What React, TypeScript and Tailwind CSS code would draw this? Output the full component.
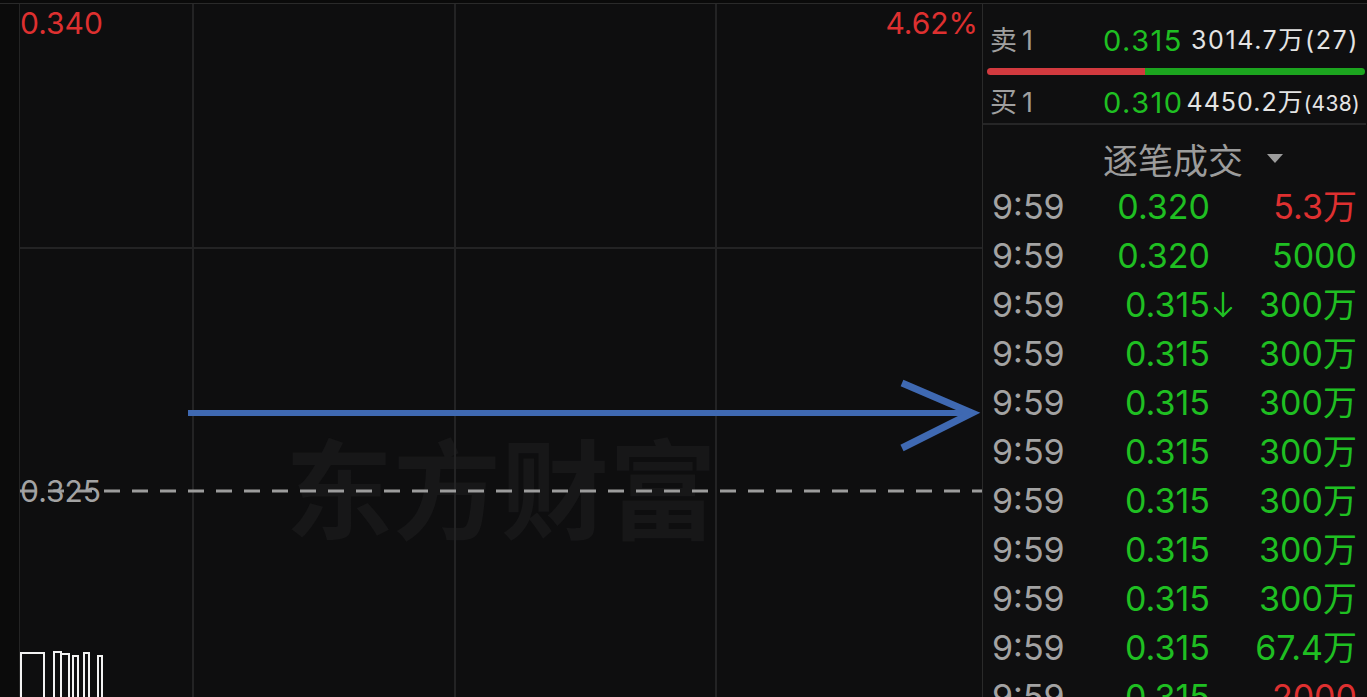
import React from "react";

const GREEN = "text-[#1fbf22]";
const RED = "text-[#de3030]";

type Trade = { p: string; v: string; red?: boolean; down?: boolean };
const trades: Trade[] = [
  { p: "0.320", v: "5.3万", red: true },
  { p: "0.320", v: "5000" },
  { p: "0.315", v: "300万", down: true },
  { p: "0.315", v: "300万" },
  { p: "0.315", v: "300万" },
  { p: "0.315", v: "300万" },
  { p: "0.315", v: "300万" },
  { p: "0.315", v: "300万" },
  { p: "0.315", v: "300万" },
  { p: "0.315", v: "67.4万" },
  { p: "0.315", v: "2000", red: true },
];

function DownArrow() {
  return (
    <svg width="22" height="26" viewBox="0 0 22 26" className="absolute left-full top-1/2 -translate-y-1/2 ml-[2px]">
      <path d="M11 1 V24 M3 16 L11 24 L19 16" stroke="#1fbf22" strokeWidth="2.4" fill="none" strokeLinecap="round" strokeLinejoin="round" />
    </svg>
  );
}

function Chart() {
  return (
    <div className="relative w-[963px] h-full border-l border-[#242424] bg-[#0e0e0f] overflow-hidden">
      <div className="absolute left-[265px] top-[426px] h-[108px] leading-[108px] text-[108px] font-bold text-[#171718] whitespace-nowrap" style={{ fontFamily: '"Noto Sans CJK SC", sans-serif' }}>
        东方财富
      </div>
      <svg className="absolute left-0 top-0" width="962" height="693" viewBox="0 0 962 693">
        <g stroke="#232324" strokeWidth="2">
          <line x1="173" y1="0" x2="173" y2="693" />
          <line x1="435" y1="0" x2="435" y2="693" />
          <line x1="696" y1="0" x2="696" y2="693" />
          <line x1="0" y1="244" x2="962" y2="244" />
        </g>
        <line x1="0" y1="487" x2="962" y2="487" stroke="#9c9c9c" strokeWidth="3" strokeDasharray="16 12" />
        <g stroke="#3f69b2" fill="none">
          <line x1="168" y1="409" x2="950" y2="409" strokeWidth="6" />
          <path d="M882 379 L952 409 L882 444" strokeWidth="7" strokeLinejoin="miter" />
        </g>
        <g stroke="#f2f2f2" strokeWidth="2" fill="none">
          <rect x="1" y="649" width="23" height="60" />
          <rect x="34" y="648" width="7" height="60" />
          <rect x="41" y="650" width="8" height="60" />
          <rect x="53" y="652" width="5" height="60" />
          <rect x="64" y="649" width="5" height="60" />
          <rect x="78" y="652" width="4" height="60" />
        </g>
      </svg>
      <div className={`absolute left-0 top-[4px] text-[30px] leading-none ${RED}`}>0.340</div>
      <div className={`absolute right-[4px] top-[4px] text-[30px] leading-none ${RED}`}>4.62%</div>
      <div className="absolute left-0 top-[472px] text-[30px] leading-none text-[#a3a3a3]">0.325</div>
    </div>
  );
}

function Panel() {
  return (
    <div className="w-[384px] h-full bg-[#0f0f10] border-l border-[#2a2a2a] flex flex-col overflow-hidden">
      <div className="pt-[10px] shrink-0">
        <div className="h-[52px] flex items-center pl-[7px] pr-[7px]">
          <div className="w-[113px] text-[27px] leading-none text-[#a0a0a0]">卖<span className="ml-[5px]">1</span></div>
          <div className={`text-[29px] leading-none tracking-[1.5px] ${GREEN}`}>0.315</div>
          <div className="flex-1 text-right text-[25px] leading-none tracking-[1.6px] text-[#e4e4e4] whitespace-nowrap">3014.7万(27)</div>
        </div>
        <div className="ml-[4px] mr-[1px] mt-[2px] h-[7px] flex rounded-full overflow-hidden">
          <div className="w-[158px] bg-[#d23a3f]" />
          <div className="flex-1 bg-[#1ca51f]" />
        </div>
        <div className="h-[48px] pt-[6px] flex items-center pl-[7px] pr-[6px]">
          <div className="w-[113px] text-[27px] leading-none text-[#a0a0a0]">买<span className="ml-[5px]">1</span></div>
          <div className={`text-[29px] leading-none tracking-[1.5px] ${GREEN}`}>0.310</div>
          <div className="flex-1 text-right text-[25px] leading-none tracking-[1px] text-[#e4e4e4] whitespace-nowrap">
            4450.2万<span className="text-[21px] tracking-[0.3px]">(438)</span>
          </div>
        </div>
      </div>
      <div className="h-[2px] shrink-0 bg-[#262627]" />
      <div className="h-[57px] shrink-0 pt-[10px] flex items-center pl-[120px]">
        <span className="text-[35px] leading-none text-[#9c9c9c]" style={{ fontFamily: '"Noto Sans CJK SC", sans-serif' }}>逐笔成交</span>
        <svg width="16" height="9" viewBox="0 0 16 9" className="ml-[24px]">
          <path d="M0 0 H16 L8 9 Z" fill="#9c9c9c" />
        </svg>
      </div>
      {trades.map((t, i) => (
        <div key={i} className="h-[49px] shrink-0 flex items-center pl-[9px] pr-[9px] text-[34px] leading-none">
          <div className="w-[120px] text-[#a3a3a3]">9:59</div>
          <div className={`relative w-[98px] text-right ${GREEN}`}>
            {t.p}
            {t.down && <DownArrow />}
          </div>
          <div className={`flex-1 text-right whitespace-nowrap ${t.red ? RED : GREEN}`}>{t.v}</div>
        </div>
      ))}
    </div>
  );
}

export default function App() {
  return (
    <div className="w-[1367px] h-[697px] bg-[#0e0e0f] overflow-hidden flex flex-col" style={{ fontFamily: 'Inter, "Noto Sans CJK SC", sans-serif' }}>
      <div className="h-[3px] shrink-0 bg-[#0a0a0a]" />
      <div className="h-px shrink-0 bg-[#2a2a2a]" />
      <div className="flex-1 flex min-h-0">
        <div className="w-[19px] bg-[#0b0b0b]" />
        <Chart />
        <Panel />
      </div>
    </div>
  );
}
